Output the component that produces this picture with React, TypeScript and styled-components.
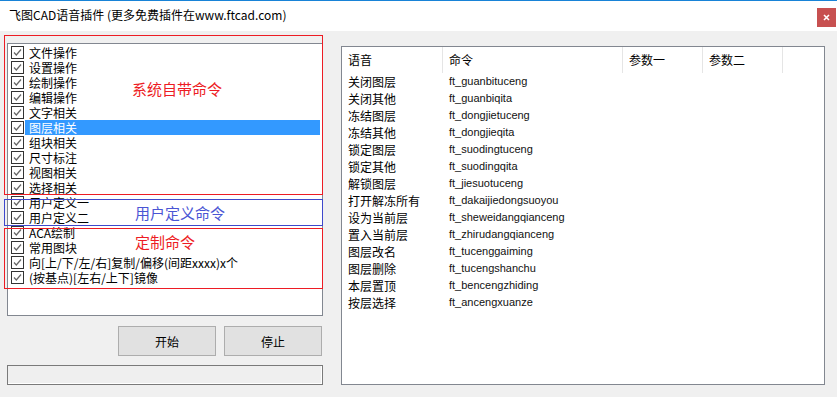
import React from 'react';
import styled, { createGlobalStyle } from 'styled-components';

const GlobalStyle = createGlobalStyle`
    html, body {
        margin: 0;
        padding: 0;
        background: #f0f0f0;
    }
    body {
        font-family: "Noto Sans CJK SC", "Liberation Sans", sans-serif;
        font-size: 12px;
        color: #000;
    }
`;

type Option = { label: string; selected?: boolean };

const options: Option[] = [
    { label: '文件操作' },
    { label: '设置操作' },
    { label: '绘制操作' },
    { label: '编辑操作' },
    { label: '文字相关' },
    { label: '图层相关', selected: true },
    { label: '组块相关' },
    { label: '尺寸标注' },
    { label: '视图相关' },
    { label: '选择相关' },
    { label: '用户定义一' },
    { label: '用户定义二' },
    { label: 'ACA绘制' },
    { label: '常用图块' },
    { label: '向[上/下/左/右]复制/偏移(间距xxxx)x个' },
    { label: '(按基点)[左右/上下]镜像' },
];

const commands: [string, string][] = [
    ['关闭图层', 'ft_guanbituceng'],
    ['关闭其他', 'ft_guanbiqita'],
    ['冻结图层', 'ft_dongjietuceng'],
    ['冻结其他', 'ft_dongjieqita'],
    ['锁定图层', 'ft_suodingtuceng'],
    ['锁定其他', 'ft_suodingqita'],
    ['解锁图层', 'ft_jiesuotuceng'],
    ['打开解冻所有', 'ft_dakaijiedongsuoyou'],
    ['设为当前层', 'ft_sheweidangqianceng'],
    ['置入当前层', 'ft_zhirudangqianceng'],
    ['图层改名', 'ft_tucenggaiming'],
    ['图层删除', 'ft_tucengshanchu'],
    ['本层置顶', 'ft_bencengzhiding'],
    ['按层选择', 'ft_ancengxuanze'],
];

const headers = ['语音', '命令', '参数一', '参数二', ''];

const App = () => {
    return (
        <Window>
            <GlobalStyle />
            <TitleBar>
                <Title>飞图CAD语音插件 (更多免费插件在www.ftcad.com)</Title>
                <CloseButton>
                    <svg width="7" height="7" viewBox="0 0 7 7">
                        <path d="M1 1L6 6M6 1L1 6" stroke="#fff" strokeWidth="1.6" />
                    </svg>
                </CloseButton>
            </TitleBar>
            <Body>
                <LeftColumn>
                    <ListFrame>
                        {options.map((o) => (
                            <Item key={o.label}>
                                <CheckBox>
                                    <svg width="11" height="11" viewBox="0 0 11 11">
                                        <path d="M2 5.5L4.3 8L9 2.5" fill="none" stroke="#666" strokeWidth="1.2" />
                                    </svg>
                                </CheckBox>
                                <ItemLabel selected={!!o.selected}>{o.label}</ItemLabel>
                            </Item>
                        ))}
                        <Annotation color="#ed1c24" top={-9} height={160}>
                            <Note color="#ed1c24" left={127} top={44}>系统自带命令</Note>
                        </Annotation>
                        <Annotation color="#3f48cc" top={155} height={27}>
                            <Note color="#4a55d4" left={130} top={4}>用户定义命令</Note>
                        </Annotation>
                        <Annotation color="#ed1c24" top={184} height={61}>
                            <Note color="#ed1c24" left={130} top={4}>定制命令</Note>
                        </Annotation>
                    </ListFrame>
                    <ButtonRow>
                        <Button>开始</Button>
                        <Button>停止</Button>
                    </ButtonRow>
                    <Progress />
                </LeftColumn>
                <CommandList>
                    <HeaderRow>
                        {headers.map((h, i) => (
                            <HeaderCell key={i} last={i === headers.length - 1}>{h}</HeaderCell>
                        ))}
                    </HeaderRow>
                    {commands.map(([voice, cmd]) => (
                        <DataRow key={cmd}>
                            <VoiceCell>{voice}</VoiceCell>
                            <CmdCell>{cmd}</CmdCell>
                        </DataRow>
                    ))}
                </CommandList>
            </Body>
        </Window>
    );
};

const Window = styled.div`
    width: 837px;
    height: 397px;
    display: flex;
    flex-direction: column;
    overflow: hidden;
`;

const TitleBar = styled.div`
    height: 30px;
    border-top: 1px solid #1883d7;
    background: #fff;
    display: flex;
    justify-content: space-between;
    padding-left: 9px;
`;

const Title = styled.div`
    font-size: 12px;
    line-height: 28px;
    color: #000;
`;

const CloseButton = styled.div`
    width: 19px;
    height: 19px;
    margin-top: 7px;
    margin-right: 1px;
    background: #c75050;
    display: flex;
    align-items: center;
    justify-content: center;
`;

const Body = styled.div`
    display: flex;
    padding: 12px 0 0 7px;
`;

const LeftColumn = styled.div`
    width: 316px;
    display: flex;
    flex-direction: column;
`;

const ListFrame = styled.div`
    position: relative;
    box-sizing: border-box;
    height: 273px;
    border: 1px solid #828790;
    background: #fff;
    padding: 1px 2px 0 2px;
`;

const Item = styled.div`
    height: 15px;
    display: flex;
    align-items: center;
`;

const CheckBox = styled.span`
    box-sizing: border-box;
    width: 13px;
    height: 13px;
    margin-left: 1px;
    border: 1px solid #333;
    background: #fff;
    display: flex;
    align-items: center;
    justify-content: center;
    flex-shrink: 0;
`;

const ItemLabel = styled.span<{ selected: boolean }>`
    flex: 1;
    height: 15px;
    line-height: 15px;
    margin-left: 1px;
    padding-left: 4px;
    white-space: nowrap;
    background: ${({ selected }) => (selected ? '#3399ff' : 'transparent')};
    color: ${({ selected }) => (selected ? '#fff' : '#000')};
`;

const Annotation = styled.div<{ color: string; top: number; height: number }>`
    position: absolute;
    left: -4px;
    top: ${({ top }) => top}px;
    width: 319px;
    height: ${({ height }) => height}px;
    box-sizing: border-box;
    border: 1px solid ${({ color }) => color};
    pointer-events: none;
`;

const Note = styled.span<{ color: string; left: number; top: number }>`
    position: absolute;
    left: ${({ left }) => left}px;
    top: ${({ top }) => top}px;
    font-size: 15px;
    line-height: 18px;
    color: ${({ color }) => color};
    white-space: nowrap;
`;

const ButtonRow = styled.div`
    display: flex;
    justify-content: flex-end;
    gap: 8px;
    margin-top: 10px;
    padding-right: 1px;
`;

const Button = styled.div`
    box-sizing: border-box;
    width: 98px;
    height: 30px;
    border: 1px solid #adadad;
    background: #e1e1e1;
    display: flex;
    align-items: center;
    justify-content: center;
    font-size: 12px;
`;

const Progress = styled.div`
    box-sizing: border-box;
    height: 20px;
    margin-top: 9px;
    border: 1px solid #7a7a7a;
    background: #efefef;
    box-shadow: inset -1px -1px 0 #fff;
`;

const CommandList = styled.div`
    box-sizing: border-box;
    width: 484px;
    height: 339px;
    margin: 3px 0 0 18px;
    border: 1px solid #828790;
    background: #fff;
`;

const HeaderRow = styled.div`
    display: grid;
    grid-template-columns: 101px 180px 80px 80px 1fr;
    height: 26px;
`;

const HeaderCell = styled.div<{ last: boolean }>`
    box-sizing: border-box;
    padding-left: 6px;
    line-height: 26px;
    border-right: ${({ last }) => (last ? 'none' : '1px solid #e5e5e5')};
`;

const DataRow = styled.div`
    display: grid;
    grid-template-columns: 101px 1fr;
    height: 17px;
    line-height: 17px;
`;

const VoiceCell = styled.div`
    padding-left: 6px;
    white-space: nowrap;
`;

const CmdCell = styled.div`
    padding-left: 6px;
    font-family: "Liberation Sans", sans-serif;
    font-size: 11px;
    color: #111;
`;

export default App;
